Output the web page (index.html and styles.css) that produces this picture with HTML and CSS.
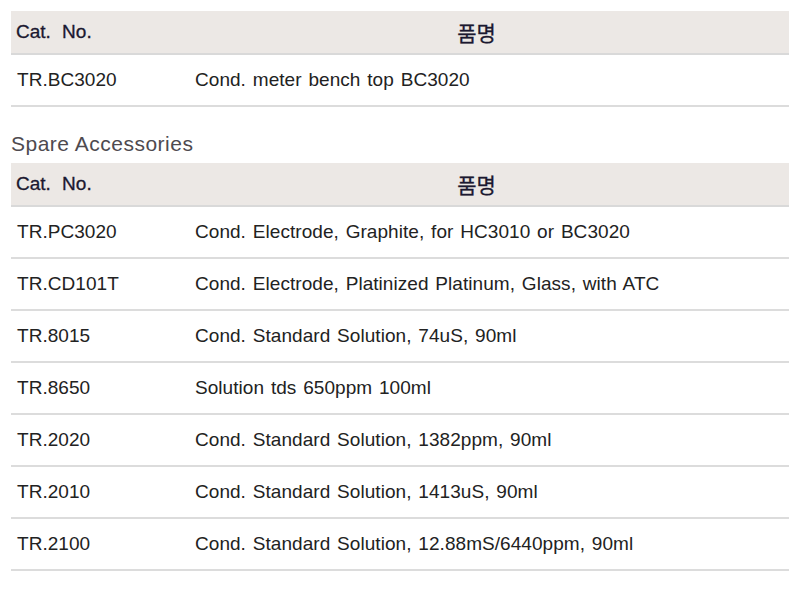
FILE: index.html
```html
<!DOCTYPE html>
<html lang="ko">
<head>
<meta charset="utf-8">
<link rel="stylesheet" href="styles.css">
</head>
<body>
<table class="spec">
  <thead>
    <tr><th class="c1">Cat. No.</th><th class="c2">품명</th></tr>
  </thead>
  <tbody>
    <tr><td class="c1">TR.BC3020</td><td class="c2">Cond. meter bench top BC3020</td></tr>
  </tbody>
</table>
<h3 class="section">Spare Accessories</h3>
<table class="spec">
  <thead>
    <tr><th class="c1">Cat. No.</th><th class="c2">품명</th></tr>
  </thead>
  <tbody>
    <tr><td class="c1">TR.PC3020</td><td class="c2">Cond. Electrode, Graphite, for HC3010 or BC3020</td></tr>
    <tr><td class="c1">TR.CD101T</td><td class="c2">Cond. Electrode, Platinized Platinum, Glass, with ATC</td></tr>
    <tr><td class="c1">TR.8015</td><td class="c2">Cond. Standard Solution, 74uS, 90ml</td></tr>
    <tr><td class="c1">TR.8650</td><td class="c2">Solution tds 650ppm 100ml</td></tr>
    <tr><td class="c1">TR.2020</td><td class="c2">Cond. Standard Solution, 1382ppm, 90ml</td></tr>
    <tr><td class="c1">TR.2010</td><td class="c2">Cond. Standard Solution, 1413uS, 90ml</td></tr>
    <tr><td class="c1">TR.2100</td><td class="c2">Cond. Standard Solution, 12.88mS/6440ppm, 90ml</td></tr>
  </tbody>
</table>
</body>
</html>
```

FILE: styles.css
```css
html, body {
  margin: 0;
  padding: 0;
  background: #ffffff;
}
body {
  padding: 11px 0 0 11px;
  font-family: "Liberation Sans", "Noto Sans CJK KR", sans-serif;
  color: #222222;
}
.spec {
  width: 778px;
  border-collapse: collapse;
  table-layout: fixed;
}
.spec th {
  height: 42px;
  padding: 0;
  background: #ece8e5;
  border-bottom: 2px solid #d9d9d9;
  font-size: 19px;
  font-weight: normal;
  color: #1b1830;
  -webkit-text-stroke: 0.3px #1b1830;
  vertical-align: middle;
}
.spec td {
  height: 50px;
  padding: 0;
  border-bottom: 2px solid #dcdcdc;
  font-size: 19px;
  color: #222222;
  word-spacing: 1.5px;
  letter-spacing: 0.05px;
  vertical-align: middle;
}
.spec .c1 {
  width: 178px;
  text-align: left;
  padding-left: 6px;
}
.spec th.c1 {
  padding-left: 5px;
  word-spacing: 6px;
}
.spec td.c2 {
  padding-left: 1px;
  text-align: left;
}
.spec th.c2 {
  text-align: center;
  padding-right: 30px;
  font-size: 21px;
  font-family: "Noto Sans CJK KR", sans-serif;
}
.section {
  margin: 25px 0 7px 0;
  height: 24px;
  line-height: 24px;
  font-size: 21px;
  letter-spacing: 0.5px;
  font-weight: normal;
  color: #4e4a4f;
}
```
